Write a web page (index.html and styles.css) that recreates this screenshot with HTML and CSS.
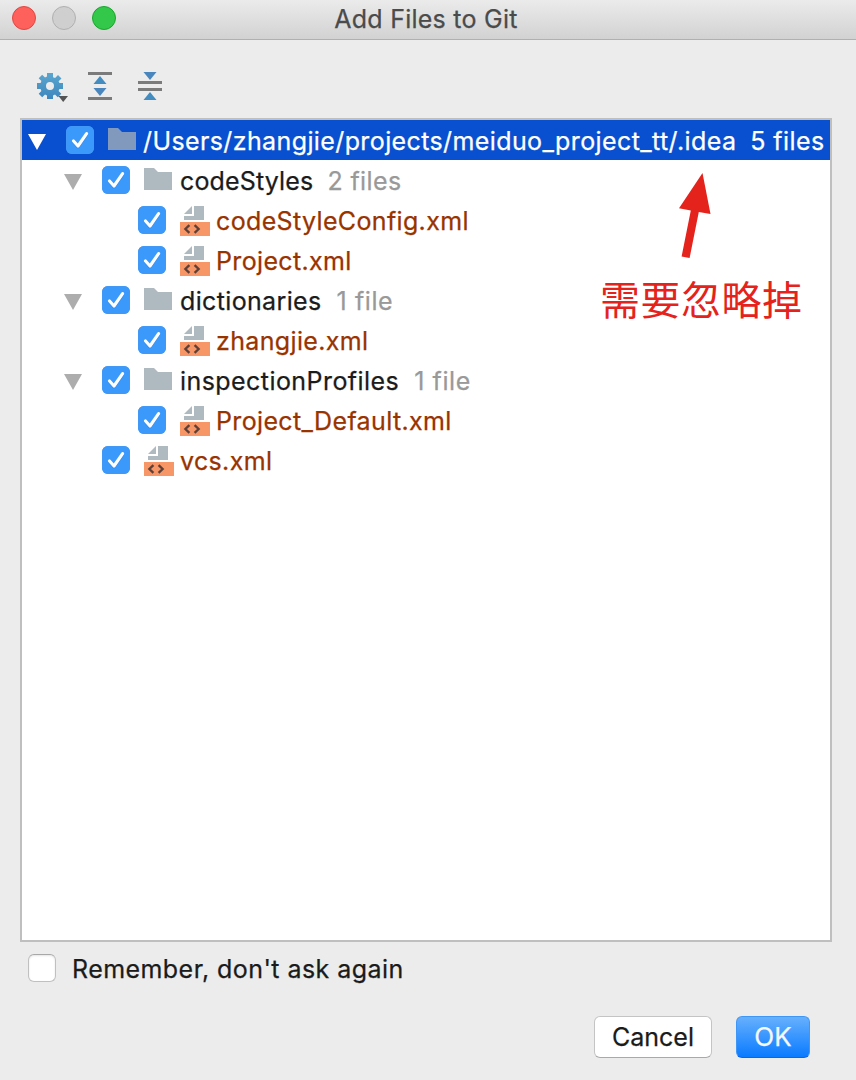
FILE: index.html
```html
<!DOCTYPE html>
<html lang="en">
<head>
<meta charset="utf-8">
<title>Add Files to Git</title>
<link rel="stylesheet" href="styles.css">
</head>
<body>
<svg width="0" height="0" class="defs" aria-hidden="true">
  <defs>
    <linearGradient id="blue" x1="0" y1="0" x2="0" y2="1"><stop offset="0" stop-color="#5ba6cf"/><stop offset="1" stop-color="#3d86bd"/></linearGradient>
    <symbol id="arrow" viewBox="0 0 18 16"><path d="M0 0H18L9 16Z" fill="currentColor"/></symbol>
    <symbol id="check" viewBox="0 0 28 28"><path d="M7.5 15L12 20L20.6 7.6" fill="none" stroke="#1c6fd0" stroke-opacity=".35" stroke-width="3" stroke-linecap="round" stroke-linejoin="round" transform="translate(0 1)"/><path d="M7.5 15L12 20L20.6 7.6" fill="none" stroke="#fff" stroke-width="3.1" stroke-linecap="round" stroke-linejoin="round"/></symbol>
    <symbol id="folder" viewBox="0 0 30 22"><path d="M0 0H10L14 4H28V22H0Z" fill="currentColor"/></symbol>
    <symbol id="xml" viewBox="0 0 30 30"><path d="M4 8L12 0V8ZM14 0H24V14H4V10H14Z" fill="#aeb9c0"/><path d="M0 16H30V30H0Z" fill="#f79667"/><path d="M9.4 19.2L5.4 23L9.4 26.8M14.6 19.2L18.6 23L14.6 26.8" fill="none" stroke="#5d4037" stroke-width="2.3"/></symbol>
  </defs>
</svg>
<div class="dialog">
  <header class="titlebar">
    <div class="lights"><i class="light red"></i><i class="light gray"></i><i class="light green"></i></div>
    <h1 class="title">Add Files to Git</h1>
  </header>
  <div class="toolbar">
    <svg class="tool gear" width="32" height="30" viewBox="0 0 32 30">
      <g fill="url(#blue)"><path fill-rule="evenodd" d="M10 0H16V4.2L18.1 5L21 2L24.5 5.5L21.6 8.2L22.4 10H26V16H22.4L21.6 18L24.3 20.8L20.8 24.3L18 21.6L16 22.4V26H10V22.4L8 21.6L5.2 24.3L1.7 20.8L4.4 18L3.6 16H0V10H3.6L4.4 8L1.7 5.2L5.2 1.7L8 4.4L10 3.6ZM13 9A4 4 0 1 0 13 17A4 4 0 1 0 13 9Z"/></g>
      <path d="M21.5 23H31L26.2 29Z" fill="#545454"/>
    </svg>
    <svg class="tool" width="24" height="28" viewBox="0 0 24 28"><path d="M0 0H24V3H0ZM0 25H24V28H0Z" fill="#7b7b7b"/><path d="M12 4L18.5 12H5.5Z" fill="#438cc0"/><path d="M5.5 16H18.5L12 24Z" fill="#4a86be"/></svg>
    <svg class="tool" width="24" height="28" viewBox="0 0 24 28"><path d="M0 9H24V12H0ZM0 16H24V19H0Z" fill="#7b7b7b"/><path d="M5.5 0H18.5L12 8Z" fill="#4a86be"/><path d="M12 20L18.5 28H5.5Z" fill="#438cc0"/></svg>
  </div>
  <div class="tree">
    <div class="row root selected"><svg class="arrow"><use href="#arrow"/></svg><span class="box on"><svg><use href="#check"/></svg></span><svg class="folder"><use href="#folder"/></svg><span class="name path">/Users/zhangjie/projects/meiduo_project_tt/.idea</span><span class="count">5 files</span></div>
    <div class="row level1"><svg class="arrow"><use href="#arrow"/></svg><span class="box on"><svg><use href="#check"/></svg></span><svg class="folder"><use href="#folder"/></svg><span class="name styles">codeStyles</span><span class="count">2 files</span></div>
    <div class="row level2"><span class="box on"><svg><use href="#check"/></svg></span><svg class="xml"><use href="#xml"/></svg><span class="name file config">codeStyleConfig.xml</span></div>
    <div class="row level2"><span class="box on"><svg><use href="#check"/></svg></span><svg class="xml"><use href="#xml"/></svg><span class="name file project">Project.xml</span></div>
    <div class="row level1"><svg class="arrow"><use href="#arrow"/></svg><span class="box on"><svg><use href="#check"/></svg></span><svg class="folder"><use href="#folder"/></svg><span class="name dicts">dictionaries</span><span class="count single">1 file</span></div>
    <div class="row level2"><span class="box on"><svg><use href="#check"/></svg></span><svg class="xml"><use href="#xml"/></svg><span class="name file user">zhangjie.xml</span></div>
    <div class="row level1"><svg class="arrow"><use href="#arrow"/></svg><span class="box on"><svg><use href="#check"/></svg></span><svg class="folder"><use href="#folder"/></svg><span class="name profiles">inspectionProfiles</span><span class="count single">1 file</span></div>
    <div class="row level2"><span class="box on"><svg><use href="#check"/></svg></span><svg class="xml"><use href="#xml"/></svg><span class="name file default">Project_Default.xml</span></div>
    <div class="row leaf"><span class="box on"><svg><use href="#check"/></svg></span><svg class="xml"><use href="#xml"/></svg><span class="name file vcs">vcs.xml</span></div>
    <div class="note">
      <svg class="pointer" width="34" height="86" viewBox="0 0 34 86"><path d="M23.5 0L31.5 41L19.8 39L10.6 85L2.6 83.5L11.8 37.5L0 35.2Z" fill="#e5231d"/></svg>
      <span class="note-text">需要忽略掉</span>
    </div>
  </div>
  <label class="remember"><span class="box"></span><span class="remember-text">Remember, don't ask again</span></label>
  <footer class="actions"><button class="btn cancel">Cancel</button><button class="btn ok">OK</button></footer>
</div>
</body>
</html>
```
FILE: styles.css
```css
* { box-sizing: border-box; }
body { margin: 0; background: #ececec; color: #1b1b1b; font: 25px/40px Inter, "Liberation Sans", sans-serif; -webkit-text-stroke: .25px currentColor; }
svg { display: block; flex: none; }
.defs { position: absolute; }
.dialog { width: 856px; height: 1080px; display: flex; flex-direction: column; overflow: hidden; }
.titlebar { height: 40px; flex: none; display: grid; grid-template-columns: 120px 1fr 124px; background: linear-gradient(#ebebeb, #d2d2d2); border-bottom: 1px solid #b0b0b0; }
.lights { display: flex; gap: 16px; padding: 6px 0 0 12px; }
.light { width: 24px; height: 24px; border-radius: 50%; border: 1px solid; }
.red { background: #fe605b; border-color: #e04742; }
.gray { background: #cfcfcf; border-color: #b0b0b0; }
.green { background: #34c84a; border-color: #19a62c; }
.title { margin: 0; font-size: 25px; line-height: 38px; font-weight: 400; letter-spacing: .25px; text-align: center; color: #4b4b4b; white-space: nowrap; }
.toolbar { height: 78px; flex: none; display: flex; gap: 26px; padding: 32px 0 0 37px; }
.gear { margin: 1px -7px 0 0; }
.tree { position: relative; height: 824px; flex: none; margin: 0 24px 0 20px; border: 2px solid #bfbfbf; background: #fff; }
.row { height: 40px; display: flex; align-items: center; white-space: nowrap; }
.root { padding-left: 6px; }
.level1 { padding-left: 42px; }
.level2 { padding-left: 116px; }
.leaf { padding-left: 80px; }
.arrow { width: 18px; height: 16px; margin: 4px 20px 0 0; color: #adadad; }
.box { width: 28px; height: 28px; flex: none; border-radius: 6px; border: 1px solid #c0c0c0; border-top-color: #a8a8a8; background: #fff; box-shadow: inset 0 1px 2px #e5e5e5; }
.box.on { border: 0; background: #3b99fc; box-shadow: inset 0 0 0 1px #4198f5; margin-right: 14px; }
.box svg { width: 28px; height: 28px; }
.folder { width: 30px; height: 22px; margin: -2px 6px 0 0; color: #aeb9c0; }
.xml { width: 30px; height: 30px; margin: 2px 6px 0 0; }
.name { margin-top: 2px; letter-spacing: .35px; }
.path { margin-left: -1px; letter-spacing: .39px; }
.styles { letter-spacing: .15px; }
.profiles { letter-spacing: .44px; }
.count { margin: 2px 0 0 14px; color: #999; letter-spacing: .4px; }
.single { margin-left: 15px; letter-spacing: .6px; }
.file { color: #993300; }
.selected { background: #0850d0; color: #fff; }
.selected .arrow, .selected .count { color: #fff; }
.selected .folder { color: #8199bd; }
.note { position: absolute; left: 578px; top: 53px; display: flex; flex-direction: column; color: #e5231d; -webkit-text-stroke: 0; }
.pointer { margin-left: 79px; }
.note-text { font: 40px/60px "Noto Sans CJK SC", sans-serif; letter-spacing: .5px; margin-top: 9px; white-space: nowrap; }
.remember { display: flex; align-items: center; height: 40px; margin: 6px 0 0 28px; }
.remember-text { margin: 2px 0 0 16px; letter-spacing: .44px; white-space: nowrap; }
.actions { display: flex; justify-content: flex-end; gap: 24px; padding: 28px 46px 0 0; }
.btn { height: 42px; padding: 0; border-radius: 6px; font: inherit; white-space: nowrap; }
.cancel { width: 118px; border: 1px solid #c4c4c4; border-bottom-color: #a9a9a9; background: #fff; color: #1b1b1b; }
.ok { width: 74px; border: 1px solid #3e97f8; border-bottom-color: #0a64f0; background: linear-gradient(#66b0fd, #0a7bff); color: #f4f8ff; font-size: 26px; }
```
